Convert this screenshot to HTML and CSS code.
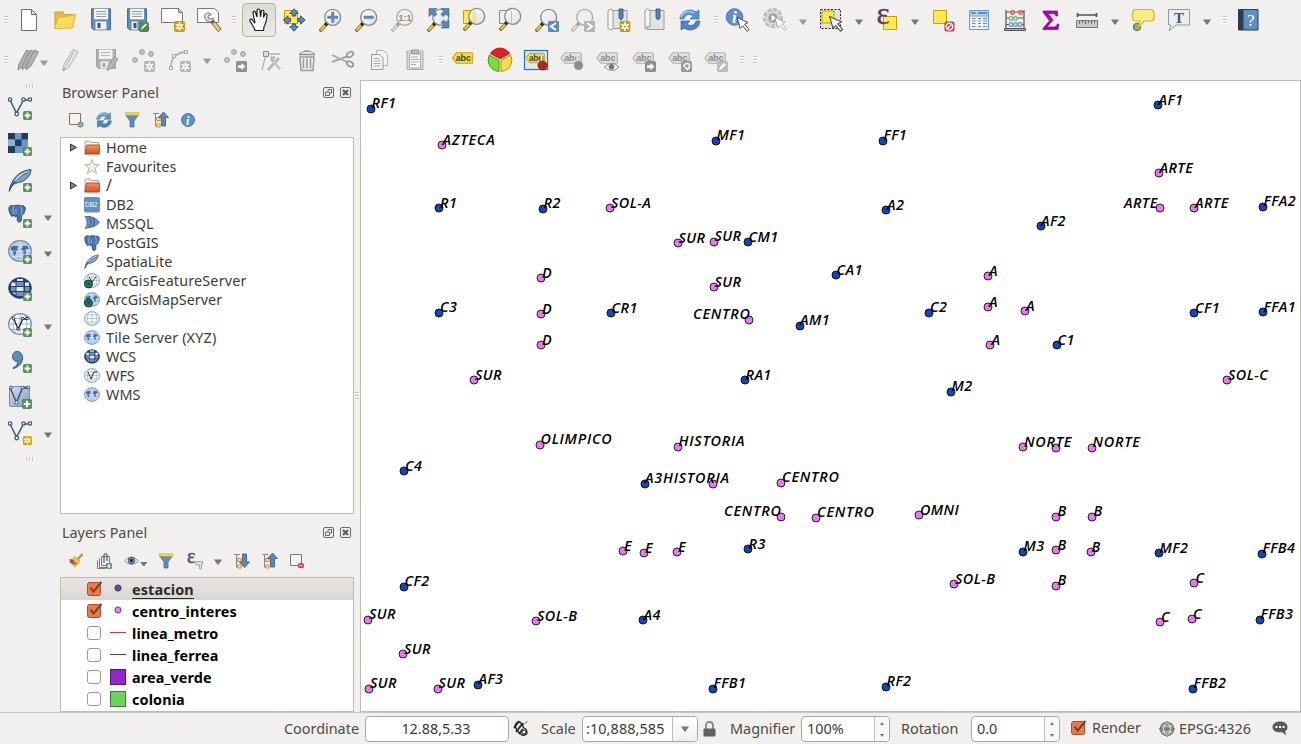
FILE: index.html
```
<!DOCTYPE html>
<html lang="en">
<head>
<meta charset="utf-8">
<title>QGIS</title>
<link rel="stylesheet" href="styles.css">
</head>
<body>
<svg class="defs" width="0" height="0">
  <defs>
    <linearGradient id="gOrange" x1="0" y1="0" x2="0" y2="1"><stop offset="0" stop-color="#f59263"/><stop offset="1" stop-color="#dd4b14"/></linearGradient>
    <linearGradient id="gBlue" x1="0" y1="0" x2="1" y2="1"><stop offset="0" stop-color="#d5dfea"/><stop offset="1" stop-color="#7d9bbf"/></linearGradient>
    <linearGradient id="gLens" x1="0" y1="0" x2="1" y2="1"><stop offset="0" stop-color="#fff"/><stop offset="1" stop-color="#dcdcdc"/></linearGradient>
  </defs>
  <symbol id="plus" viewBox="0 0 9 9"><rect x=".3" y=".3" width="8.4" height="8.4" rx="1.5" fill="#5a9257" stroke="#3e7c3b" stroke-width=".6"/><path d="M4.5 1.6v5.8M1.6 4.5h5.8" stroke="#fff" stroke-width="1.8"/></symbol>
  <symbol id="star" viewBox="0 0 11 11"><rect width="11" height="11" rx="2" fill="currentColor"/><path d="M5.5 1v9M1.6 3.2l7.8 4.6M9.4 3.2L1.6 7.8" stroke="#fff" stroke-width="1.5"/><circle cx="5.5" cy="5.5" r="2.5" fill="#fff"/><circle cx="5.5" cy="5.5" r="1.1" fill="currentColor"/></symbol>
  <symbol id="mag" viewBox="0 0 24 24"><path d="M0.800 23.200L7.500 16" stroke="#6b5a2a" stroke-width="3.4"/><path d="M1.500 22.300L6 17.600" stroke="#fcc52e" stroke-width="2.200"/><path d="M6.500 16.800l2-2.200" stroke="#222" stroke-width="3.400"/><circle cx="13.700" cy="9.300" r="8" fill="url(#gLens)" fill-opacity=".82" stroke="#8a8a8a" stroke-width="1.300"/></symbol>
  <symbol id="maggray" viewBox="0 0 24 24"><path d="M0.800 23.200L7.500 16" stroke="#aaa" stroke-width="3.400"/><path d="M1.500 22.300L6 17.600" stroke="#ddd" stroke-width="2"/><path d="M6.500 16.800l2-2.200" stroke="#999" stroke-width="3"/><circle cx="13.700" cy="9.300" r="8" fill="#efefee" stroke="#aaa" stroke-width="1.300"/></symbol>
  <symbol id="down" viewBox="0 0 8 6"><path d="M0 .5h8L4.600 5.500H3.400z" fill="#777"/></symbol>
  <symbol id="cursor" viewBox="0 0 14 16"><path d="M1 1l3.200 11 2.600-2.600 4.400 5.400 2-1.700-4.500-5.200L12 6z" fill="#fff" stroke="currentColor"/></symbol>
  <symbol id="vec" viewBox="0 0 24 24"><path d="M2 4l6.500 13L15.500 4h7" fill="none" stroke="#3d5a7c" stroke-width="1.500"/><g fill="#fff" stroke="#3d5a7c" stroke-width="1.300"><circle cx="2" cy="3.500" r="1.700"/><circle cx="8.700" cy="18" r="1.800"/><circle cx="15.500" cy="3.500" r="1.700"/><circle cx="22" cy="3.500" r="1.700"/></g></symbol>
  <symbol id="globe" viewBox="0 0 24 22"><ellipse cx="12" cy="11" rx="11.300" ry="10.300" fill="#fff" stroke="#6b90bf" stroke-width="1.300"/><path d="M12 1v20M1 11h22M3 5.500h18M3 16.500h18M8 1.500c-4 5-4 14 0 19M16 1.500c4 5 4 14 0 19" fill="none" stroke="#8fb0d8"/></symbol>
  <symbol id="globemap" viewBox="0 0 24 22"><ellipse cx="12" cy="11" rx="11.300" ry="10.300" fill="#b9cee6" stroke="#6b8cb5" stroke-width="1.300"/><path d="M3 7l4-2 4 1-2 2 1 2-2 1v3l-2 2-1-4-2-2zM14 5l5 0 2 4-3 0 0 4-2 2-1-4-2-2 2-2zM10 17l2 1-1 1z" fill="#446c9c"/><path d="M12 1v20M1 11h22M3 5.500h18M3 16.500h18" stroke="#e4edf7" stroke-width=".6"/></symbol>
  <symbol id="globedark" viewBox="0 0 24 22"><ellipse cx="12" cy="11" rx="11.300" ry="10.300" fill="#243f66" stroke="#243f66"/><path d="M8.500 5h7v4h-7zM3 10h4.500v4H3zM17 10h4.500v4H17zM8.500 15h7v4h-7z" fill="#6d94c5"/><path d="M8.500 10h7v4h-7zM3.500 5.500h4V9H3zM17 5.500h4V9h-4zM9 2h6v2H9zM4 15.500h3.500V18zM17 15.500h3L17 18z" fill="#dfe9f5"/></symbol>
  <symbol id="feather" viewBox="0 0 24 24"><path d="M1.500 22C3 13 9 3 23 1.500c0 5-4 10-9 12-3 1.200-6 1.500-9 3z" fill="#7f9fc5" stroke="#294b73"/><path d="M1 23.500C4 15 11 8 20 4" fill="none" stroke="#294b73" stroke-width="1.200"/><path d="M7 13C11 8 15 5 20 3.500" fill="none" stroke="#e8f0f8" stroke-width="1.200"/></symbol>
  <symbol id="elephant" viewBox="0 0 18 18"><path d="M1 3C2 0 5 1 6 1.500 9 .5 11 .5 13 1.500c3-1 5 1 4 4-.6 2.500-1.600 4.500-3 5l-.7.300v4.500c0 3-3.600 3-4 .5V11l-2 1.500-1-2L4 12C2 10 .5 6 1 3z" fill="#4d77a8" stroke="#274a72" stroke-width="1"/><path d="M6 2c-1.500 3-1 6 0 8M12.500 2c1.500 2 1.500 5 1 8M8 5v4" stroke="#9dbbdd" fill="none" stroke-width=".9"/></symbol>
  <symbol id="refresh" viewBox="0 0 22 22"><path d="M1 10C1 3 10-2 17 3l3-2v9h-9l3-3C10 4 6 6 5 10z" fill="#5a92cf" stroke="#3672b4" stroke-width=".7"/><path d="M21 12C21 19 12 24 5 19l-3 2v-9h9l-3 3c4 3 8 1 9-3z" fill="#4a86c6" stroke="#3060a0" stroke-width=".7"/><path d="M2 8C5 2 10 1 15 4" stroke="#b6d2ee" fill="none" stroke-width="1.300"/></symbol>
  <symbol id="funnel" viewBox="0 0 14 16"><path d="M0 2h14L9 9v6H5V9z" fill="#5f8cbf" stroke="#47719f" stroke-width=".8"/><path d="M0 .7h14v2.500H0z" fill="#f7e04c" stroke="#b9a323" stroke-width=".6"/></symbol>
  <symbol id="uparrow" viewBox="0 0 16 16"><path d="M0 1.500h6M2.500 1.500v13M2.500 7h3M2.500 13.500h3" stroke="#888" fill="none"/><path d="M4 5.500h3v3H4zM4 12h3v3H4z" fill="#fff" stroke="#f08a1c" stroke-width="1.200"/><path d="M10.500 0l5 5.500h-3V14h-4V5.500h-3z" fill="#5c88b9" stroke="#35597f" stroke-width=".8"/></symbol>
  <symbol id="downarrow" viewBox="0 0 16 16"><path d="M0 1.500h6M2.500 1.500v13M2.500 7h3M2.500 13.500h3" stroke="#888" fill="none"/><path d="M4 5.500h3v3H4zM4 12h3v3H4z" fill="#fff" stroke="#f08a1c" stroke-width="1.200"/><path d="M10.500 14.500l5-5.500h-3V1h-4v8h-3z" fill="#5c88b9" stroke="#35597f" stroke-width=".8"/></symbol>
  <symbol id="folder" viewBox="0 0 16 15"><path d="M1 12V2q0-1 1-1h4l1 1.500h7.500V12z" fill="#f4f2ee" stroke="#aaa79f"/><path d="M2.500 5h13.200l-.5 9.100H.8z" fill="url(#gOrange)" stroke="#b5481d" stroke-width=".9"/></symbol>
  <symbol id="tag" viewBox="0 0 22 12"><path d="M.8 6L5 .8h15.300q1 0 1 1v8.400q0 1-1 1H5z" fill="#f0dc44" stroke="#c4a50f" stroke-width="1.100"/><text x="4.300" y="8.800" class="abc">abc</text></symbol>
  <symbol id="taggray" viewBox="0 0 22 12"><path d="M.8 6L5 .8h15.300q1 0 1 1v8.400q0 1-1 1H5z" fill="#e2e1df" stroke="#b0b0b0" stroke-width="1.100"/><text x="4.300" y="8.800" class="abc dim">abc</text></symbol>
  <symbol id="check" viewBox="0 0 17 17"><rect x="1.500" y="2.500" width="13" height="13" rx="2" fill="#f07746" stroke="#a6502f"/><path d="M4.500 7.500l3 4.200L15.500 2" fill="none" stroke="#6d4536" stroke-width="2"/></symbol>
  <symbol id="float" viewBox="0 0 11 11"><rect x=".5" y=".5" width="10" height="10" rx="1.500" fill="none" stroke="#6a6864"/><path d="M2.500 5h4v3.500h-4zM5 4.500v-2h3.500V6H7" fill="none" stroke="#6a6864"/></symbol>
  <symbol id="close" viewBox="0 0 11 11"><rect x=".5" y=".5" width="10" height="10" rx="1.500" fill="none" stroke="#6a6864"/><path d="M3 3l5 5M8 3L3 8" stroke="#5a5854" stroke-width="2"/></symbol>
</svg>

<div class="toolbar">
  <i class="grip first"></i>
  <div class="btn"><svg class="ic"><path d="M4.500 1.500h10l5 5v16h-15z" fill="#fff" stroke="#6e6e6e"/><path d="M14.500 1.500v5h5z" fill="#ddd" stroke="#6e6e6e"/></svg></div>
  <div class="btn"><svg class="ic"><path d="M2 20.500V4h8l1 2.500h9V10" fill="#e3bd3d" stroke="#c9a32d"/><path d="M1.500 20.500L5 9.500l9-1 8.500-2-3 13.500z" fill="#fcdc58" stroke="#d8b440"/></svg></div>
  <div class="btn"><svg class="ic"><path d="M2.500.8h19v21h-17l-2-2z" fill="#5e8abc" stroke="#456e9e"/><path d="M5 .8h14v10.500H5z" fill="#f7f7f5"/><path d="M7 3.500h10M7 6h10M7 8.500h10" stroke="#999"/><path d="M6.500 13.500h11v8h-11z" fill="#f1f1f1"/><path d="M8.500 15h3v5h-3z" fill="#34567d"/></svg></div>
  <div class="btn"><svg class="ic"><path d="M2.500.8h19v21h-17l-2-2z" fill="#5e8abc" stroke="#456e9e"/><path d="M5 .8h14v10.500H5z" fill="#f7f7f5"/><path d="M7 3.500h10M7 6h10M7 8.500h10" stroke="#999"/><path d="M6.500 13.500h6v8h-6z" fill="#f1f1f1"/><path d="M8.500 15h3v5h-3z" fill="#34567d"/><rect x="14" y="14" width="10" height="10" rx="2" fill="#4e8a50"/><path d="M16 22l1-3 4-3.500 1 1-4 4z" fill="#fff"/></svg></div>
  <div class="btn"><svg class="ic"><path d="M.5 .5h17l4 4v10h-21z" fill="#fff" stroke="#777"/><path d="M17.500 .5v4h4z" fill="#ddd" stroke="#777"/><use href="#star" x="13" y="13" width="11" height="11" color="#c49c08"/></svg></div>
  <div class="btn"><svg class="ic"><path d="M.5 .5h17l4 4v10h-21z" fill="#fff" stroke="#777"/><path d="M14 12l9 10.500" stroke="#6c6650" stroke-width="4.400"/><path d="M16.500 15l6 7" stroke="#e3cd6c" stroke-width="3"/><path d="M8 6.500c2-2.500 5-2 6.500.5l-3 .2-.4 2.800 3 1 2-1c1 3-3 5-6 3C8 12 7 9 8 6.500z" fill="#ddd" stroke="#777"/></svg></div>
  <i class="grip g14"></i>
  <div class="btn active"><svg class="ic"><path d="M8 22.500c-1-4-3.500-6.500-5-9.500-.5-1.800 1.300-2.500 2.500-1L8 15 6 5c-.2-2 2-2.300 2.500-.5L10 9V2.500C10 .5 12.700.5 13 2.500l.5 6.500.8-5.500c.5-1.900 2.800-1.500 2.600.4L16.500 9.500l1.300-3c.8-1.500 2.500-.7 2.200.8-.4 4-.8 8-3 11.500l-.5 3.700z" fill="#fff" stroke="#1a1a1a" stroke-width="1.200"/></svg></div>
  <div class="btn"><svg class="ic"><path d="M1.500 2.500h13v13h-13z" fill="#fce94f" stroke="#c4a000"/><path d="M11 .8l4.200 4.700h-2.500V8H9.300V5.500H6.800zM11 23.200l4.200-4.700h-2.500V16H9.300v2.500H6.800zM.3 12l4.700-4.200v2.500h2.500v3.400H5v2.500zM22.200 12l-4.700-4.200v2.500H15v3.400h2.500v2.500z" fill="#5d8bc0" stroke="#2d4d73" stroke-width=".9"/></svg></div>
  <div class="btn"><svg class="ic"><use href="#mag"/><path d="M13.700 3.800v11M8.200 9.300h11" stroke="#5c88bd" stroke-width="3"/></svg></div>
  <div class="btn"><svg class="ic"><use href="#mag"/><path d="M8.700 9.300h10" stroke="#5c88bd" stroke-width="3"/></svg></div>
  <div class="btn"><svg class="ic"><use href="#maggray"/><text x="7.500" y="12.500" class="ratio">1:1</text></svg></div>
  <div class="btn"><svg class="ic"><use href="#mag"/><path d="M2 .5h8L7.500 3 10 6 7.500 8.500 5 6 2 8.500zM22 .5v8L19 6l-3 2.500L13.800 6l3-2.700L14 .5zM22 20v-8l-2.500 2.500-3-2.500-2.500 2.500 3 3L14 20z" fill="#5b88bb" stroke="#355d8d" stroke-width=".6"/></svg></div>
  <div class="btn"><svg class="ic"><path d="M.5 2.500h12v13h-12z" fill="#fce94f" stroke="#c4a000"/><use href="#mag" y="-1"/><path d="M11 3.500v10" stroke="#f0dd70" stroke-width="5" opacity=".55"/></svg></div>
  <div class="btn"><svg class="ic"><path d="M.5 2.500h12v13h-12z" fill="#eceeef" stroke="#888"/><use href="#mag" y="-1"/><path d="M12.500 3v11" stroke="#bbb"/></svg></div>
  <div class="btn"><svg class="ic"><use href="#mag"/><rect x="13" y="13" width="11" height="11" rx="1" fill="#5d8bc0"/><path d="M21 15l-5 3.500 5 3.500" fill="none" stroke="#fff" stroke-width="2"/></svg></div>
  <div class="btn"><svg class="ic"><use href="#maggray"/><rect x="13" y="13" width="11" height="11" rx="1" fill="#b4b4b4"/><path d="M16 15l5 3.500-5 3.500" fill="none" stroke="#fff" stroke-width="2"/></svg></div>
  <div class="btn"><svg class="ic"><path d="M3 2.500h17v18H3z" fill="#e3e3e4" stroke="#999"/><path d="M1 4q0-3 2.500-3T6 4v17q-4 2-5-1z" fill="#f7f7f7" stroke="#999"/><path d="M12 1h4v9l-2 2-2-2z" fill="#5884b7" stroke="#2d4d73" stroke-width=".8"/><use href="#star" x="12.500" y="13" width="11" height="11" color="#c49c08"/></svg></div>
  <div class="btn"><svg class="ic"><path d="M4 2.500h17v19H4z" fill="#e3e3e4" stroke="#999"/><path d="M2 4q0-3 2.500-3T7 4v15q-5-1-5 2z" fill="#f7f7f7" stroke="#999"/><path d="M13 1h4v9l-2 2-2-2z" fill="#5884b7" stroke="#2d4d73" stroke-width=".8"/></svg></div>
  <div class="btn"><svg class="ic"><use href="#refresh" x="0" y="1" width="22" height="22"/></svg></div>
  <i class="grip g11 mid"></i>
  <div class="btn w37"><svg class="ic"><circle cx="8.500" cy="9" r="8.300" fill="#5f8fc6" stroke="#4a7ab0"/><text x="6" y="15" class="info big">i</text><g color="#444"><use href="#cursor" x="10" y="8.500" width="14" height="16"/></g></svg></div>
  <div class="btn"><svg class="ic"><circle cx="10" cy="10" r="8.700" fill="none" stroke="#bbb" stroke-width="2.500" stroke-dasharray="4.500 1.300"/><circle cx="10" cy="10" r="6.500" fill="#e4e4e3" stroke="#bbb"/><circle cx="10" cy="10" r="4.800" fill="#a0a0a0"/><path d="M8.500 7l5 3-5 3z" fill="#fff"/><g color="#aaa"><use href="#cursor" x="11" y="8.500" width="13" height="15"/></g></svg></div>
  <svg class="dd light"><use href="#down"/></svg>
  <div class="btn"><svg class="ic"><path d="M1.500 1.500h20v19h-20z" fill="#e1e1e1" stroke="#222" stroke-dasharray="2 1.500"/><path d="M3 3h12v12H3z" fill="#fce94f" stroke="#c4a000"/><g color="#444"><use href="#cursor" x="9.500" y="7.500" width="15" height="17"/></g></svg></div>
  <svg class="dd"><use href="#down"/></svg>
  <div class="btn"><svg class="ic"><path d="M8.500 8.500h13v13h-13z" fill="#fce94f" stroke="#c4a000"/><text x="1.500" y="15.500" class="eps">ε</text></svg></div>
  <svg class="dd"><use href="#down"/></svg>
  <div class="btn"><svg class="ic"><path d="M2.500 2.500h13v13h-13z" fill="#fce94f" stroke="#c4a000"/><rect x="13.500" y="13.500" width="10" height="10" rx="2" fill="#d92f2f"/><circle cx="18.500" cy="18.500" r="3.200" fill="none" stroke="#fff" stroke-width="1.400"/><path d="M16.500 20.500l4-4" stroke="#fff" stroke-width="1.300"/></svg></div>
  <div class="btn"><svg class="ic"><path d="M2.500 2.500h19v19h-19z" fill="#eef4fa" stroke="#6b97c8"/><path d="M3 3h18v4.500H3z" fill="#b7d0ea"/><path d="M4.500 5h4M11 5h9" stroke="#5d8bc0" stroke-width="2"/><path d="M3 8h18" stroke="#6b97c8"/><path d="M5 10.500h3.500M5 13h3.500M5 15.500h3.500M5 18.500h3.500M11 10.500h3M16 10.500h4M11 13h3M16 13h4M11 15.500h3M16 15.500h4M11 18.500h3M16 18.500h4" stroke="#5d8bc0"/></svg></div>
  <div class="btn"><svg class="ic"><path d="M3 2v19M21 2v19M3 4h18M3 10h18M3 16.500h18" stroke="#555" stroke-width="1.200"/><path d="M1.500 20.500h21v2h-21z" fill="#aaa" stroke="#555"/><g fill="#f4b6b6" stroke="#cc4848" stroke-width="1.200"><circle cx="9.500" cy="4.500" r="1.800"/><circle cx="17.500" cy="4.500" r="1.800"/></g><g fill="#d5efd5" stroke="#73b76f" stroke-width="1.200"><circle cx="8" cy="10.500" r="1.900"/><circle cx="12.500" cy="10.500" r="1.900"/></g><g fill="#d6e7f3" stroke="#6796b6" stroke-width="1.200"><circle cx="8" cy="16.500" r="1.900"/><circle cx="12.500" cy="16.500" r="1.900"/><circle cx="17" cy="16.500" r="1.900"/></g></svg></div>
  <div class="btn"><svg class="ic"><path d="M4 3h14.500v5h-1.500Q16.500 5.500 14 5.500H9l5 6.500-6 7h7.500q2 0 3-3h1.300L19 21.500H4v-1.200l6.500-7.500L4 4.200z" fill="#b000b5" stroke="#8d0591" stroke-width=".7"/></svg></div>
  <div class="btn"><svg class="ic"><path d="M2.500 5v4M21.500 5v4M3 7h18" stroke="#355b84" stroke-width="1.700"/><path d="M1.500 12.500h21v7h-21z" fill="#c9c9c9" stroke="#777"/><path d="M4.500 13v3M7.500 13v2M10.500 13v3M13.500 13v2M16.500 13v3M19.500 13v2" stroke="#666"/></svg></div>
  <svg class="dd"><use href="#down"/></svg>
  <div class="btn"><svg class="ic"><circle cx="6" cy="19" r="3.700" fill="#82ad86" stroke="#4d7352"/><path d="M5 1.500h14.500q3.500 0 3.500 4v4q0 3.500-3.500 3.500H13l-5.500 7 1-7H5Q1.500 13 1.500 9.500v-4q0-4 3.500-4z" fill="#fbec88" stroke="#d4b30c" stroke-width="1.200"/></svg></div>
  <div class="btn"><svg class="ic"><path d="M1.500 1.500h21v15.500H9l-7 6 2-6H1.500z" fill="#e7f0f4" stroke="#999"/><text x="7" y="14.500" class="tee">T</text></svg></div>
  <svg class="dd"><use href="#down"/></svg>
  <i class="grip g13 mid"></i>
  <div class="btn"><svg class="ic"><path d="M2.500 1.500h19.500v20.500H2.500z" fill="#5f8fc6" stroke="#2c3e4e"/><path d="M2.500 1.500h5v20.500h-5z" fill="#2c3e4e"/><text x="11" y="17.500" class="qm">?</text></svg></div>
</div>

<div class="toolbar">
  <i class="grip first"></i>
  <div class="btn w41"><svg class="ic"><g fill="#b2b2b2" stroke="#8d8d8d"><path d="M1 22l1-6L9.500 2l4 2L6 18z"/><path d="M5 22l1-6L13.500 2l4 2L10 18z"/><path d="M9 22l1-6L17.500 2l4 2L14 18z"/></g></svg><svg class="dds light"><use href="#down"/></svg></div>
  <div class="btn"><svg class="ic"><path d="M5 22.500l1-6L15 1.500l5 2.500-9 15z" fill="#e7e7e6" stroke="#b2b2b2"/><path d="M5 23l.5-3.500 2.500 1.500zM8 17.500l8-14" fill="#aaa" stroke="#b2b2b2"/></svg></div>
  <div class="btn"><svg class="ic"><path d="M2.500 1.500h19v19h-17l-2-2z" fill="#b2b2b2" stroke="#a2a2a2"/><path d="M5 1.500h13.500v9.500H5z" fill="#f0f0f0"/><path d="M7 4.500h9M7 7.500h9" stroke="#bbb"/><path d="M6.500 13.500h8v7h-8z" fill="#eee"/><path d="M8.500 15h3v4h-3z" fill="#aaa"/><path d="M13 22.500l1-4.500 7-9 3 2-7 9.500z" fill="#b8b8b8" stroke="#999"/></svg></div>
  <div class="btn"><svg class="ic"><g fill="#c4c4c4" stroke="#9a9a9a"><circle cx="5" cy="12" r="2.400"/><circle cx="12" cy="4" r="2.400"/><circle cx="21" cy="6" r="2.400"/></g><use href="#star" x="14" y="13" width="11" height="11" color="#b4b4b4"/></svg></div>
  <div class="btn"><svg class="ic"><path d="M5 20C5 10 9 5 20 4" fill="none" stroke="#b2b2b2" stroke-width="1.800"/><g fill="#eee" stroke="#a6a6a6"><path d="M3.500 18.500h3v3h-3zM6.500 6.500h3v3h-3zM18.500 2.500h3v3h-3z"/></g><use href="#star" x="14" y="13" width="11" height="11" color="#b4b4b4"/></svg></div>
  <svg class="dd w21 light"><use href="#down"/></svg>
  <div class="btn"><svg class="ic"><g fill="#c4c4c4" stroke="#9a9a9a"><circle cx="4" cy="12" r="2.400"/><circle cx="11" cy="4" r="2.400"/><circle cx="20" cy="6" r="2.400"/></g><rect x="13" y="13" width="11" height="11" rx="1.500" fill="#8f8f8f"/><path d="M15 17.300h3.500V15l4 3.600-4 3.600v-2.300H15z" fill="#fff"/></svg></div>
  <div class="btn"><svg class="ic"><path d="M3 22L7 6h14" fill="none" stroke="#b2b2b2" stroke-width="1.300"/><path d="M4.500 3.500h5v5h-5z" fill="#ddd" stroke="#8b8b8b"/><path d="M9 22L20 10" stroke="#b6b6b6" stroke-width="2.600"/><path d="M12 11l9 10" stroke="#c4c4c4" stroke-width="2.600"/><path d="M12 9l4 0-3 4z" fill="#ccc" stroke="#a6a6a6"/></svg></div>
  <div class="btn"><svg class="ic"><path d="M5 9l1 13.500h12L19 9z" fill="#f2f2f2" stroke="#999" stroke-width="1.500"/><path d="M8.500 10.500v10M12 10.500v10M15.500 10.500v10" stroke="#999" stroke-width="1.600"/><path d="M4 6.500h16M9 3.200h6" stroke="#8d8d8d" stroke-width="1.600"/><path d="M4 6q4-3 8-3t8 3" fill="none" stroke="#999"/></svg></div>
  <div class="btn"><svg class="ic"><path d="M1 7l16 7.500M1 14l15-5.500" stroke="#aaa" stroke-width="1.900"/><g fill="none" stroke="#999" stroke-width="1.700"><ellipse cx="19" cy="6.500" rx="3.500" ry="2.300" transform="rotate(-30 19 6.500)"/><ellipse cx="19" cy="16" rx="3.500" ry="2.300" transform="rotate(30 19 16)"/></g></svg></div>
  <div class="btn"><svg class="ic"><path d="M9.500 2.500h7l4 4v11h-11z" fill="#f4f4f4" stroke="#b4b4b4"/><path d="M4.500 6.500h8l3.500 3.500v11.500H4.500z" fill="#f4f4f4" stroke="#999"/><path d="M6.500 10.500h6M6.500 13h7M6.500 15.500h7M6.500 18h7" stroke="#aaa"/></svg></div>
  <div class="btn"><svg class="ic"><path d="M4 3h16v18.500H4z" fill="#ddd" stroke="#aaa"/><path d="M6.500 5.500h11V20h-11z" fill="#f7f7f7" stroke="#aaa"/><path d="M8.500 2h7v4h-7z" fill="#bbb" stroke="#999"/><path d="M8 9h7M8 11.500h8M8 14h8M8 16.500h5" stroke="#aaa"/></svg></div>
  <i class="grip g12"></i>
  <div class="btn w37"><svg class="ic"><use href="#tag" x="0.500" y="4" width="22" height="12"/></svg></div>
  <div class="btn"><svg class="ic"><path d="M12 11L2.200 5.500Q6 0 12 0T21.800 5.500z" fill="#d22" stroke="#b11010" stroke-width=".7"/><path d="M11 12.500L1.300 7Q-1 13 1.300 17 4 22.500 11 23.500z" fill="#7ade3a" stroke="#3f961e"/><path d="M13 12.500L22.700 7Q25 13 22.700 17 20 22.500 13 23.500z" fill="#f8dd4c" stroke="#b58d12"/></svg></div>
  <div class="btn"><svg class="ic wide"><rect x="0.500" y="2.500" width="23" height="19" fill="#dce9f7" stroke="#2271d3" stroke-width="1.200"/><use href="#tag" x="1" y="4" width="20" height="12"/><path d="M17.500 8v7" stroke="#555" stroke-width="3.600"/><path d="M17.500 8v7" stroke="#eee" stroke-width="2"/><circle cx="18.500" cy="17.500" r="4.600" fill="#b42222" stroke="#861414" stroke-width=".6"/></svg></div>
  <div class="btn"><svg class="ic"><use href="#taggray" x="0" y="4" width="22" height="12"/><path d="M17.500 8v7" stroke="#aaa" stroke-width="3.600"/><path d="M17.500 8v7" stroke="#eee" stroke-width="2"/><circle cx="18.500" cy="17.500" r="4.600" fill="#8e8e8e"/></svg></div>
  <div class="btn"><svg class="ic"><use href="#taggray" x="0" y="4" width="22" height="12"/><path d="M8.500 19q7-7.500 14.500 0-7 7-14.500 0z" fill="#f3f3f3" stroke="#8b8b8b"/><circle cx="15.500" cy="18.700" r="2.800" fill="#777"/></svg></div>
  <div class="btn"><svg class="ic"><use href="#taggray" x="0" y="4" width="22" height="12"/><rect x="13" y="13" width="11" height="11" rx="1.500" fill="#8f8f8f"/><path d="M15 17.300h3.500V15l4 3.600-4 3.600v-2.300H15z" fill="#fff"/></svg></div>
  <div class="btn"><svg class="ic"><use href="#taggray" x="0" y="4" width="22" height="12"/><rect x="13" y="13" width="11" height="11" rx="1.500" fill="#999"/><path d="M16 19q0-3.500 3-3.500t2.500 3q0 2-2.500 3M17 19l2.500 2.500" fill="none" stroke="#fff" stroke-width="1.600"/></svg></div>
  <div class="btn"><svg class="ic"><use href="#taggray" x="0" y="4" width="22" height="12"/><rect x="13" y="13" width="11" height="11" rx="1.500" fill="#bbb"/><path d="M15 22l1-3 4.500-4 1.500 1.500-4.500 4.500z" fill="#fff"/></svg></div>
  <i class="grip g13"></i><i class="grip g13"></i>
</div>

<div class="main">
  <div class="side">
    <i class="hgrip"></i>
    <div class="sbtn"><svg class="ic"><use href="#vec" width="24" height="24"/><use href="#plus" x="15" y="15" width="9" height="9"/></svg></div>
    <div class="sbtn"><svg class="ic"><path d="M0 1h20v20H0z" fill="#6b96c8"/><path d="M0 1h7v6.500H0zM13.500 1H20v6.500h-6.500zM7 7.500h6.500V14H7zM0 14h7v7H0z" fill="#213a5d"/><path d="M0 7.500h7V14H0z" fill="#8fb1d9"/><use href="#plus" x="15" y="15" width="9" height="9"/></svg></div>
    <div class="sbtn"><svg class="ic"><use href="#feather" width="24" height="24"/><use href="#plus" x="15" y="15" width="9" height="9"/></svg></div>
    <div class="sbtn"><svg class="ic"><use href="#elephant" x="0" y="0" width="18" height="19"/><use href="#plus" x="15" y="15" width="9" height="9"/></svg><svg class="dd s"><use href="#down"/></svg></div>
    <div class="sbtn"><svg class="ic"><use href="#globemap" y="0" width="24" height="22"/><use href="#plus" x="15" y="15" width="9" height="9"/></svg><svg class="dd s"><use href="#down"/></svg></div>
    <div class="sbtn"><svg class="ic"><use href="#globedark" y="0" width="24" height="22"/><use href="#plus" x="15" y="15" width="9" height="9"/></svg></div>
    <div class="sbtn"><svg class="ic"><use href="#globe" y="0" width="24" height="22"/><path d="M6 6l4 10 5-10h4" fill="none" stroke="#222" stroke-width="1.300"/><g fill="#fff" stroke="#222"><circle cx="5.500" cy="5.500" r="1.300"/><circle cx="10" cy="16" r="1.300"/><circle cx="14.500" cy="5.500" r="1.300"/><circle cx="19" cy="5.500" r="1.300"/></g><use href="#plus" x="15" y="15" width="9" height="9"/></svg><svg class="dd s"><use href="#down"/></svg></div>
    <div class="sbtn"><svg class="ic"><path d="M5 19c3-1.500 5-4 5-7-3 1-5.500-1-5.500-4.500C4.500 4 7 2 10 2.500c5 1 6 8 2.500 12.500-2 2.500-4.500 4-7.500 4.500z" fill="#5d8bc0" stroke="#2d4d73" stroke-width=".9"/><use href="#plus" x="15" y="15" width="9" height="9"/></svg></div>
    <div class="sbtn"><svg class="ic"><rect x="1.500" y="1.500" width="20" height="20" rx="1" fill="url(#gBlue)" stroke="#6d8eb5"/><path d="M2 2.500l6.500 15L14.500 3H21" fill="none" stroke="#344f6c" stroke-width="1.300"/><g fill="#fff" stroke="#344f6c"><circle cx="3" cy="2.500" r="1.400"/><circle cx="8.500" cy="17.500" r="1.700"/><circle cx="14.500" cy="2.500" r="1.400"/><circle cx="20.500" cy="2.500" r="1.400"/></g><use href="#plus" x="14" y="14" width="10" height="10"/></svg></div>
    <div class="sbtn"><svg class="ic"><use href="#vec" y="-1" width="24" height="24"/><use href="#star" x="15" y="15" width="9" height="9" color="#c9a60c"/></svg><svg class="dd s"><use href="#down"/></svg></div>
    <i class="hgrip low"></i>
  </div>

  <div class="docks">
    <div class="title"><span>Browser Panel</span><svg class="tb"><use href="#float"/></svg><svg class="tb"><use href="#close"/></svg></div>
    <div class="ptools">
      <svg><path d="M1.500 1.500h11v11h-11z" fill="#f3f3f2" stroke="#777"/><circle cx="12.500" cy="12.500" r="2.500" fill="#8fc193" stroke="#4d8a52"/></svg>
      <svg><use href="#refresh" width="16" height="16"/></svg>
      <svg><use href="#funnel" x="1" y="0" width="14" height="16"/></svg>
      <svg><use href="#uparrow" x="1" width="16" height="16"/></svg>
      <svg><circle cx="8" cy="8" r="6.500" fill="#5f8fc6" stroke="#4a7ab0"/><text x="6" y="12.500" class="info">i</text></svg>
    </div>
    <div class="tree">
      <div class="row"><svg class="ex"><path d="M1.500 1l6 3.500-6 3.500z" fill="#888" stroke="#333"/></svg><svg class="ti"><use href="#folder" width="16" height="15"/></svg><span>Home</span></div>
      <div class="row"><i class="ex"></i><svg class="ti"><path d="M8 .5l2 5 5.300.3-4.200 3.400 1.500 5.300L8 11.500l-4.600 3L4.900 9.200.7 5.800 6 5.500z" fill="#f1f1ea" stroke="#b5b5a6"/></svg><span>Favourites</span></div>
      <div class="row"><svg class="ex"><path d="M1.500 1l6 3.500-6 3.500z" fill="#888" stroke="#333"/></svg><svg class="ti"><use href="#folder" width="16" height="15"/></svg><span class="root">/</span></div>
      <div class="row"><i class="ex"></i><svg class="ti"><rect width="16" height="15.500" rx="2" fill="#6090c5"/><text x="1" y="10" class="db">DB2</text></svg><span>DB2</span></div>
      <div class="row"><i class="ex"></i><svg class="ti"><path d="M1 .5Q10-.500 15.500 6 13 11 1 12.500 5 7 1 .5z" fill="#6b91bb" stroke="#436b99" stroke-width=".8"/><path d="M5 .5q4 5 0 11M9 1.500q3 4 0 9" fill="none" stroke="#2f5683"/></svg><span>MSSQL</span></div>
      <div class="row"><i class="ex"></i><svg class="ti"><use href="#elephant" width="16" height="16"/></svg><span>PostGIS</span></div>
      <div class="row"><i class="ex"></i><svg class="ti"><use href="#feather" width="15" height="15"/></svg><span>SpatiaLite</span></div>
      <div class="row"><i class="ex"></i><svg class="ti"><use href="#globe" width="16" height="15"/><path d="M5 4l3 5 4-5" fill="none" stroke="#333"/><circle cx="4.500" cy="11" r="4" fill="#2b7a3e" stroke="#17324d"/><path d="M3 9l3 1-2 3z" fill="#183e77"/></svg><span class="wider">ArcGisFeatureServer</span></div>
      <div class="row"><i class="ex"></i><svg class="ti"><use href="#globemap" width="16" height="15"/><circle cx="4.500" cy="11" r="4" fill="#2b7a3e" stroke="#17324d"/><path d="M3 9l3 1-2 3z" fill="#183e77"/></svg><span>ArcGisMapServer</span></div>
      <div class="row"><i class="ex"></i><svg class="ti"><use href="#globe" width="16" height="15"/></svg><span>OWS</span></div>
      <div class="row"><i class="ex"></i><svg class="ti"><use href="#globemap" width="16" height="15"/></svg><span class="wider">Tile Server (XYZ)</span></div>
      <div class="row"><i class="ex"></i><svg class="ti"><use href="#globedark" width="16" height="15"/></svg><span>WCS</span></div>
      <div class="row"><i class="ex"></i><svg class="ti"><use href="#globe" width="16" height="15"/><path d="M4 4l3 7 3-7h3" fill="none" stroke="#333"/></svg><span>WFS</span></div>
      <div class="row"><i class="ex"></i><svg class="ti"><use href="#globemap" width="16" height="15"/></svg><span>WMS</span></div>
    </div>
    <div class="split"><i class="hgrip"></i></div>
    <div class="title"><span>Layers Panel</span><svg class="tb"><use href="#float"/></svg><svg class="tb"><use href="#close"/></svg></div>
    <div class="ptools layers">
      <svg><path d="M14.500 1L9 7" stroke="#c98a3a" stroke-width="2.200"/><path d="M7 3.500l5 4.500-2 3-7-4z" fill="#f0c060" stroke="#c28a30" stroke-width=".6"/><path d="M3.500 6.500l6 4.500-1.500 2L1 9z" fill="#4a7cc4"/><path d="M1 6l5 1-2 4z" fill="#d83a2a"/><path d="M3 11l6.500 .500-3 3z" fill="#f2b02a"/></svg>
      <svg><path d="M5.500 3.500h8v9h-8zM3.500 5.500v9h8M1.500 7.500v8h8" fill="none" stroke="#777"/><path d="M8 10V2q1.500-3 3 0v6" fill="none" stroke="#3d5a7c" stroke-width="1.200"/><use href="#plus" x="10" y="10" width="6" height="6"/></svg>
      <svg class="eye"><path d="M.5 8q6.500-8 14 0-7 7-14 0z" fill="#eee" stroke="#999"/><circle cx="7.500" cy="7.500" r="3.300" fill="#6d8eb5" stroke="#3e5f85"/><circle cx="7.500" cy="7.500" r="1.400" fill="#111"/><path d="M16 9h7.500l-3.250 4h-1z" fill="#777"/></svg>
      <svg class="fn"><use href="#funnel" x="0" y="0" width="14" height="16"/></svg>
      <svg class="ep"><text x="-1" y="10" class="eps small">ε</text><path d="M7.500 8.500h7v3l-1 .5v4h-2V12H8z" fill="#ddd" stroke="#aaa"/></svg>
      <svg class="dds2"><use href="#down"/></svg>
      <svg><use href="#downarrow" x="-1" width="16" height="16"/></svg>
      <svg><use href="#uparrow" x="-1" width="16" height="16"/></svg>
      <svg><path d="M-.5 1.500h11v11h-11z" fill="#f3f3f2" stroke="#777"/><rect x="7" y="10" width="6" height="5" rx="1.500" fill="#e2474a"/><path d="M8.500 12.500h3" stroke="#fff"/></svg>
    </div>
    <div class="layerlist">
      <div class="lay sel"><svg class="cb"><use href="#check"/></svg><svg class="sy"><circle cx="8" cy="7" r="3.100" fill="#5b50a0" stroke="#444"/></svg><span>estacion</span></div>
      <div class="lay"><svg class="cb"><use href="#check"/></svg><svg class="sy"><circle cx="8" cy="7" r="3.100" fill="#ee76fa" stroke="#555"/></svg><span>centro_interes</span></div>
      <div class="lay"><i class="box"></i><svg class="sy"><path d="M0 7.500h16" stroke="#d22f5b"/></svg><span>linea_metro</span></div>
      <div class="lay"><i class="box"></i><svg class="sy"><path d="M0 7.500h16" stroke="#41389a"/></svg><span>linea_ferrea</span></div>
      <div class="lay"><i class="box"></i><svg class="sy"><rect x=".5" y=".5" width="15" height="15" fill="#9324cf" stroke="#4f1670"/></svg><span>area_verde</span></div>
      <div class="lay"><i class="box"></i><svg class="sy"><rect x=".5" y=".5" width="15" height="15" fill="#6cd458" stroke="#3b7a30"/></svg><span>colonia</span></div>
    </div>
  </div>

  <div class="vsplit"><i class="grip"></i></div>

  <svg class="map" viewBox="361 81 939 630">
    <g class="est">
      <circle cx="371" cy="109" r="4"/><circle cx="716" cy="141" r="4"/><circle cx="883" cy="141" r="4"/><circle cx="1158" cy="105" r="4"/>
      <circle cx="439" cy="208" r="4"/><circle cx="543" cy="209" r="4"/><circle cx="886" cy="210" r="4"/><circle cx="1041" cy="226" r="4"/>
      <circle cx="1263" cy="207" r="4"/><circle cx="748" cy="242" r="4"/><circle cx="836" cy="275" r="4"/><circle cx="439" cy="313" r="4"/>
      <circle cx="611" cy="313" r="4"/><circle cx="800" cy="326" r="4"/><circle cx="929" cy="313" r="4"/><circle cx="1194" cy="313" r="4"/>
      <circle cx="1263" cy="312" r="4"/><circle cx="1057" cy="345" r="4"/><circle cx="745" cy="380" r="4"/><circle cx="951" cy="392" r="4"/>
      <circle cx="404" cy="471" r="4"/><circle cx="645" cy="484" r="4"/><circle cx="748" cy="549" r="4"/><circle cx="1023" cy="552" r="4"/>
      <circle cx="1159" cy="553" r="4"/><circle cx="1262" cy="554" r="4"/><circle cx="404" cy="587" r="4"/><circle cx="643" cy="620" r="4"/>
      <circle cx="1260" cy="620" r="4"/><circle cx="478" cy="685" r="4"/><circle cx="713" cy="689" r="4"/><circle cx="886" cy="687" r="4"/><circle cx="1193" cy="689" r="4"/>
    </g>
    <g class="cen">
      <circle cx="442" cy="145" r="4"/><circle cx="610" cy="208" r="4"/><circle cx="678" cy="243" r="4"/><circle cx="714" cy="242" r="4"/>
      <circle cx="714" cy="287" r="4"/><circle cx="749" cy="320" r="4"/><circle cx="541" cy="278" r="4"/><circle cx="541" cy="314" r="4"/>
      <circle cx="541" cy="345" r="4"/><circle cx="474" cy="380" r="4"/><circle cx="1159" cy="173" r="4"/><circle cx="1160" cy="208" r="4"/>
      <circle cx="1194" cy="208" r="4"/><circle cx="988" cy="276" r="4"/><circle cx="988" cy="307" r="4"/><circle cx="1025" cy="311" r="4"/>
      <circle cx="990" cy="345" r="4"/><circle cx="1227" cy="380" r="4"/><circle cx="540" cy="445" r="4"/><circle cx="678" cy="447" r="4"/>
      <circle cx="713" cy="484" r="4"/><circle cx="781" cy="483" r="4"/><circle cx="781" cy="517" r="4"/><circle cx="816" cy="518" r="4"/>
      <circle cx="919" cy="515" r="4"/><circle cx="1023" cy="447" r="4"/><circle cx="1056" cy="448" r="4"/><circle cx="1092" cy="448" r="4"/>
      <circle cx="1056" cy="517" r="4"/><circle cx="1092" cy="517" r="4"/><circle cx="1056" cy="550" r="4"/><circle cx="1091" cy="552" r="4"/>
      <circle cx="1056" cy="586" r="4"/><circle cx="623" cy="551" r="4"/><circle cx="644" cy="553" r="4"/><circle cx="677" cy="552" r="4"/>
      <circle cx="954" cy="584" r="4"/><circle cx="536" cy="621" r="4"/><circle cx="368" cy="620" r="4"/><circle cx="403" cy="654" r="4"/>
      <circle cx="369" cy="689" r="4"/><circle cx="438" cy="689" r="4"/><circle cx="1194" cy="583" r="4"/><circle cx="1160" cy="622" r="4"/><circle cx="1192" cy="619" r="4"/>
    </g>
    <g class="lbl">
      <text x="371.500" y="108">RF1</text><text x="716.500" y="140">MF1</text><text x="883.500" y="140">FF1</text><text x="1158.500" y="105">AF1</text>
      <text x="440" y="208">R1</text><text x="543.500" y="208">R2</text><text x="887" y="210">A2</text><text x="1041" y="226">AF2</text>
      <text x="1263.500" y="206">FFA2</text><text x="748.500" y="242">CM1</text><text x="836.500" y="275">CA1</text><text x="440" y="312">C3</text>
      <text x="611.500" y="313">CR1</text><text x="800" y="325">AM1</text><text x="930" y="312">C2</text><text x="1195" y="313">CF1</text>
      <text x="1263.500" y="312">FFA1</text><text x="1057.500" y="345">C1</text><text x="745.500" y="380">RA1</text><text x="951.500" y="391">M2</text>
      <text x="405" y="471">C4</text><text x="645" y="483" class="long">A3HISTORIA</text><text x="748.500" y="549">R3</text><text x="1023.500" y="551">M3</text>
      <text x="1159.500" y="553">MF2</text><text x="1262.500" y="553">FFB4</text><text x="404.500" y="586">CF2</text><text x="643.500" y="620">A4</text>
      <text x="1260.500" y="619">FFB3</text><text x="478.500" y="684">AF3</text><text x="713.500" y="688">FFB1</text><text x="886.500" y="686">RF2</text><text x="1193.500" y="688">FFB2</text>
      <text x="442.500" y="145" class="long">AZTECA</text><text x="611" y="208">SOL-A</text><text x="678.500" y="243">SUR</text><text x="714.500" y="241">SUR</text>
      <text x="714.500" y="287">SUR</text><text x="693" y="319" class="long">CENTRO</text><text x="542" y="278">D</text><text x="542" y="314">D</text>
      <text x="542" y="345">D</text><text x="475" y="380">SUR</text><text x="1159.500" y="173">ARTE</text><text x="1124" y="208">ARTE</text>
      <text x="1195" y="208">ARTE</text><text x="989" y="276">A</text><text x="989" y="307">A</text><text x="1026" y="311">A</text>
      <text x="991.500" y="345">A</text><text x="1228" y="380">SOL-C</text><text x="540.500" y="444" class="long">OLIMPICO</text><text x="678.500" y="446" class="long">HISTORIA</text>
      <text x="782" y="482" class="long">CENTRO</text><text x="724" y="516" class="long">CENTRO</text><text x="817" y="517" class="long">CENTRO</text><text x="920" y="515">OMNI</text>
      <text x="1024" y="447" class="long">NORTE</text><text x="1092.500" y="447" class="long">NORTE</text><text x="1057.500" y="516">B</text><text x="1093.500" y="516">B</text>
      <text x="1057.500" y="550">B</text><text x="1091.500" y="552">B</text><text x="1057.500" y="585">B</text><text x="624" y="551">E</text>
      <text x="645" y="553">E</text><text x="678" y="552">E</text><text x="955" y="584">SOL-B</text><text x="537" y="621">SOL-B</text>
      <text x="369" y="619">SUR</text><text x="404" y="654">SUR</text><text x="370" y="688">SUR</text><text x="438.500" y="688">SUR</text>
      <text x="1195.500" y="583">C</text><text x="1161" y="622">C</text><text x="1193" y="619">C</text>
    </g>
  </svg>
</div>

<div class="status">
  <span class="t coord">Coordinate</span>
  <div class="field c">12.88,5.33</div>
  <svg class="mouse" viewBox="0 0 16 17"><path d="M2 6q1-4 5-4l4 6q3 1 3 5-1 3-5 2-5-3-7-9z" fill="#ddd" stroke="#222" stroke-width="1.300"/><path d="M1 8l5-7M3 12l7-9M6 14l4-5" stroke="#222" stroke-width="1.500"/><circle cx="11" cy="12" r="2" fill="#fff" stroke="#222"/><path d="M10 5l5-4" stroke="#333" stroke-dasharray="2 1"/></svg>
  <span class="t scale">Scale</span>
  <div class="field combo"><span>:10,888,585</span><i><svg class="arr"><use href="#down"/></svg></i></div>
  <svg class="lock" viewBox="0 0 13 16"><path d="M3 8V4.500q0-3.500 3.500-3.500T10 4.500V8" fill="none" stroke="#888" stroke-width="1.800"/><rect x=".5" y="7.500" width="12" height="8" rx="1" fill="#626262"/></svg>
  <span class="t magn">Magnifier</span>
  <div class="field spin m"><span>100%</span><i><b class="u"></b><b class="d"></b></i></div>
  <span class="t rot">Rotation</span>
  <div class="field spin r"><span>0.0</span><i><b class="u"></b><b class="d"></b></i></div>
  <svg class="rcb"><use href="#check"/></svg>
  <span class="t rend">Render</span>
  <svg class="crs" viewBox="0 0 16 16"><circle cx="8" cy="8" r="6.500" fill="#999" stroke="#777" stroke-width="1.500"/><path d="M8 0v16M0 8h16" stroke="#777" stroke-width="1.300"/><ellipse cx="8" cy="8" rx="3.500" ry="6" fill="none" stroke="#ddd"/><path d="M3 5h10M3 11h10" stroke="#ddd"/></svg>
  <span class="t epsg">EPSG:4326</span>
  <svg class="chat" viewBox="0 0 16 15"><path d="M8 .5c5 0 7.500 2.500 7.500 5.500 0 2-1 3.500-2.500 4.500l1.500 4-4.500-3.200H8C3 11.300.5 9 .5 6S3 .5 8 .5z" fill="#5a5a5a"/><path d="M3.500 6h2M7 6h2M10.500 6h2" stroke="#fff" stroke-width="2"/></svg>
</div>
</body>
</html>
```
FILE: styles.css
```
* { box-sizing: border-box; }
body { margin: 0; width: 1301px; height: 744px; overflow: hidden; background: #f1f0ee; color: #3c3b37; font: 14.4px/19px "Noto Sans", sans-serif; display: flex; flex-direction: column; }
svg { flex: none; overflow: visible; display: block; }
i { font-style: normal; }
.defs { position: absolute; }

.toolbar { height: 40px; flex: none; display: flex; align-items: center; }
.btn { width: 36px; height: 36px; flex: none; display: flex; align-items: center; justify-content: center; }
.btn.w37 { width: 37px; padding-right: 1px; }
.btn.w41 { width: 41px; justify-content: flex-start; padding-left: 6px; }
.btn.active { width: 34px; height: 34px; margin: 0 1px; border: 1px solid #b5b2ac; border-radius: 4px; background: linear-gradient(#dddbd7, #ebeae7); }
.ic { width: 24px; height: 24px; }
.grip { width: 4px; height: 8px; flex: none; background: repeating-linear-gradient(#c9c7c3 0 1px, #fafafa 1px 2px, transparent 2px 3px); }
.grip.first { margin-left: 4px; margin-right: 3px; }
.grip.g14 { margin: 0 5px; }
.grip.g11 { margin: 0 2px 0 5px; }
.grip.g12 { margin: 0 2px 0 6px; }
.grip.g13 { margin: 0 3px 0 6px; }
.dd { width: 8px; height: 6px; margin: 4px 6px 0; }
.dd.w21 { margin: 2px 6px 0 7px; }
.light { opacity: .7; }
.dds { width: 8px; height: 6px; margin: 6px 0 0 -1px; }

.main { flex: none; height: 632px; display: flex; }
.side { width: 60px; display: flex; flex-direction: column; }
.hgrip { width: 8px; height: 4px; flex: none; background: repeating-linear-gradient(90deg, #c9c7c3 0 1px, #fafafa 1px 2px, transparent 2px 3px); }
.side .hgrip { margin: 4px 0 2px 26px; }
.side .hgrip.low { margin-top: 6px; }
.sbtn { height: 36.100px; flex: none; padding-left: 8px; display: flex; align-items: center; }
.dd.s { margin: 4px 0 0 12px; }

.docks { width: 294px; display: flex; flex-direction: column; }
.title { height: 24px; flex: none; padding: 0 3px 0 2px; display: flex; align-items: center; gap: 6px; color: #4c4b48; }
.title span { flex: 1; }
.tb { width: 11px; height: 11px; }
.ptools { height: 33px; flex: none; padding: 0 0 1px 8px; display: flex; align-items: center; gap: 12px; }
.ptools svg { width: 16px; height: 16px; }
.ptools.layers { padding-bottom: 0; }
.ptools svg.eye { width: 24px; }
.ptools svg.fn { margin-left: -1px; }
.ptools svg.ep { width: 16px; margin-left: 1px; }
.ptools svg.dds2 { width: 8px; height: 6px; margin: 3px 0 0 -2px; }
.ptools svg.dds2 + svg { margin-left: 1px; }
.tree { height: 377px; flex: none; border: 1px solid #bdbbb6; background: #fff; }
.row { height: 19px; display: flex; align-items: center; padding-left: 8px; white-space: nowrap; }
.wider { letter-spacing: .15px; }
.root { font-size: 16px; }
.ex { width: 9px; height: 9px; flex: none; }
.ti { width: 16px; height: 16px; margin: 0 6px 0 6px; }
.split { height: 6px; flex: none; padding: 1px 0 0 143px; }
.layerlist { height: 135px; flex: none; border: 1px solid #bdbbb6; background: #fff; }
.lay { height: 22px; display: flex; align-items: center; padding-left: 25px; color: #000; font-weight: 700; letter-spacing: .12px; }
.lay.sel { background: linear-gradient(#e8e6e4, #d9d6d2); color: #2b2b2b; }
.lay.sel span { border-bottom: 1px solid #2b2b2b; height: 18px; line-height: 17px; margin-top: 2px; }
.cb { width: 17px; height: 17px; margin: -1px 7px 0 0; }
.box { width: 14px; height: 14px; margin: 0 9px 0 1px; border: 1px solid #9d9a95; border-radius: 3px; background: #fff; flex: none; }
.sy { width: 16px; height: 16px; margin-right: 6px; }
.vsplit { width: 6px; display: flex; align-items: center; justify-content: center; }
.map { width: 941px; height: 632px; border: 1px solid #bdbbb6; background: #fff; }
.est circle { fill: #1343c6; stroke: #111; }
.cen circle { fill: #ec76fa; stroke: #222; }
.lbl { font: italic 600 14.400px "Open Sans", "Noto Sans", sans-serif; letter-spacing: .4px; fill: #000; }
.lbl .long { letter-spacing: .75px; }

.abc { font: 700 9px "Liberation Sans", sans-serif; letter-spacing: -.2px; fill: #444; }
.abc.dim { fill: #888; }
.ratio { font: 700 9px "Liberation Sans", sans-serif; fill: #888; }
.info { font: italic 700 12px "Liberation Serif", serif; fill: #fff; }
.info.big { font-size: 17px; }
.eps { font: 31px "Liberation Serif", serif; fill: #613866; stroke: #613866; stroke-width: .4px; }
.eps.small { font-size: 20px; }
.tee { font: 700 15px "Liberation Serif", serif; fill: #555; }
.qm { font: 17px "Liberation Serif", serif; fill: #fff; }
.db { font: 6.500px "Liberation Sans", sans-serif; fill: #fff; }

.status { height: 32px; flex: none; display: flex; align-items: center; border-top: 1px solid #c9c7c3; padding-left: 284px; white-space: nowrap; color: #4c4b48; }
.t { flex: none; }
.coord { width: 81px; } .scale { width: 41px; } .magn { width: 71px; } .rot { width: 70px; } .rend { width: 67px; } .epsg { width: 93px; }
.field { height: 26px; flex: none; border: 1px solid #aaa7a1; border-radius: 4px; background: #fff; color: #3c3b37; display: flex; align-items: center; overflow: hidden; }
.field.c { width: 144px; padding-right: 2px; justify-content: center; }
.mouse { width: 16px; height: 17px; margin: 0 12px 0 4px; }
.combo { width: 116px; }
.combo span { flex: 1; padding-left: 3px; letter-spacing: .1px; }
.combo i { width: 25px; height: 24px; border-left: 1px solid #bbb; background: linear-gradient(#fff, #f0efed); display: flex; align-items: center; justify-content: center; }
.arr { width: 8px; height: 6px; }
.lock { width: 13px; height: 16px; margin: 0 14px 0 5px; }
.spin span { flex: 1; padding-left: 5px; }
.spin i { width: 15px; height: 24px; border-left: 1px solid #bbb; background: #f8f7f6; display: flex; flex-direction: column; align-items: center; justify-content: space-between; padding: 5px 0 4px; }
.spin b { width: 0; border: 2px solid transparent; }
.spin .u { border-bottom: 3px solid #777; border-top: 0; }
.spin .d { border-top: 3px solid #777; border-bottom: 0; }
.m { width: 83px; margin-right: 17px; }
.m { width: 89px; margin-right: 11px; }
.r { width: 89px; margin-right: 10px; }
.rcb { width: 17px; height: 17px; margin: -2px 5px 0 0; }
.rend { margin-top: -2px; }
.crs { width: 16px; height: 16px; margin-right: 4px; }
.chat { width: 16px; height: 15px; }
```
